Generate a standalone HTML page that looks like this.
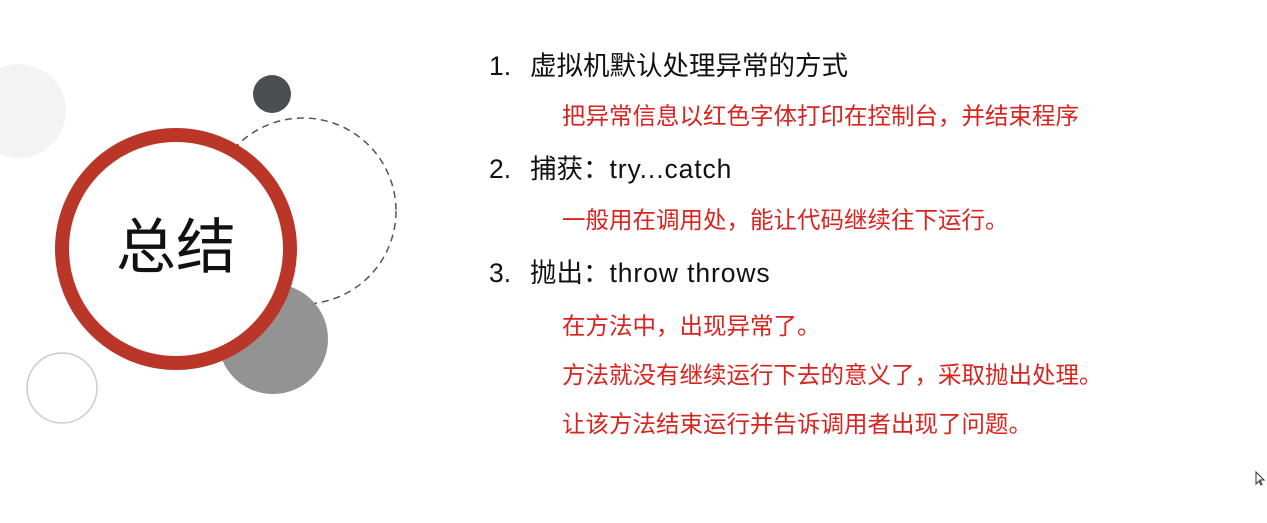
<!DOCTYPE html>
<html><head><meta charset="utf-8"><style>
body{margin:0;width:1267px;height:523px;background:#fff;overflow:hidden;position:relative;font-family:"Liberation Sans","Noto Sans CJK SC",sans-serif}
.t{position:absolute;white-space:nowrap;line-height:1}
.h{left:489px;font-size:26.5px;color:#111}
.h span{display:inline-block;width:41px}
.h i{font-style:normal;letter-spacing:0.9px}
.r{left:562px;font-size:23.5px;color:#d9231f}
</style></head><body>
<svg width="1267" height="523" style="position:absolute;left:0;top:0">
<circle cx="19" cy="111" r="47" fill="#f3f3f3"/>
<circle cx="272" cy="94" r="19" fill="#4b4f51"/>
<circle cx="303" cy="211" r="93" fill="none" stroke="#555" stroke-width="1.5" stroke-dasharray="7,5"/>
<circle cx="273" cy="339" r="55" fill="#939393"/>
<circle cx="176" cy="249" r="114" fill="#fff" stroke="#b93628" stroke-width="14"/>
<circle cx="62" cy="388" r="35" fill="none" stroke="#ccc" stroke-width="1.5"/>
<path d="M1256 472 L1256 484 L1259 481 L1261 485 L1262 484 L1260 480 L1264 480 Z" fill="#fff" stroke="#333" stroke-width="1"/>
</svg>
<div class="t" style="left:116px;top:218px;font-size:60px;color:#111">总结</div>
<div class="t h" style="top:53px"><span>1.</span>虚拟机默认处理异常的方式</div>
<div class="t r" style="top:105px">把异常信息以红色字体打印在控制台，并结束程序</div>
<div class="t h" style="top:156px"><span>2.</span>捕获：<i>try...catch</i></div>
<div class="t r" style="top:209px">一般用在调用处，能让代码继续往下运行。</div>
<div class="t h" style="top:260px"><span>3.</span>抛出：<i>throw throws</i></div>
<div class="t r" style="top:315px">在方法中，出现异常了。</div>
<div class="t r" style="top:364px">方法就没有继续运行下去的意义了，采取抛出处理。</div>
<div class="t r" style="top:413px">让该方法结束运行并告诉调用者出现了问题。</div>
</body></html>
